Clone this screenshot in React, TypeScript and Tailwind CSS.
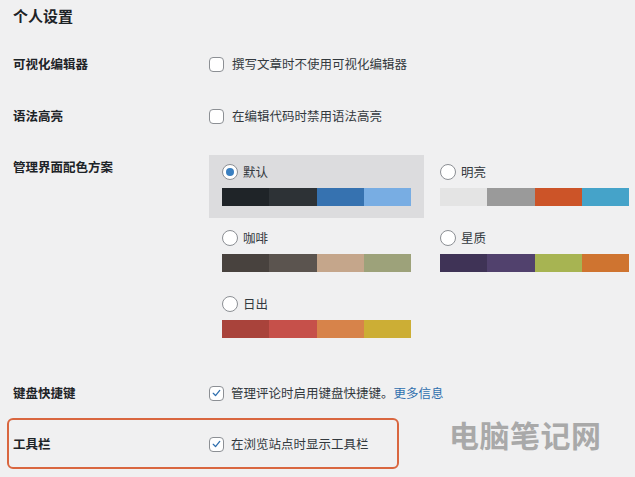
import React from 'react';

type Scheme = { name: string; colors: string[]; selected?: boolean };

const SCHEMES: Scheme[] = [
  { name: '默认', colors: ['#1f2428', '#2d3236', '#3672b0', '#78ade3'], selected: true },
  { name: '明亮', colors: ['#e4e4e4', '#9a9a9a', '#cc5428', '#45a3c9'] },
  { name: '咖啡', colors: ['#48423e', '#5b544f', '#c5a68b', '#9da27a'] },
  { name: '星质', colors: ['#3f3356', '#51416d', '#a7b452', '#cf7430'] },
  { name: '日出', colors: ['#a9433b', '#c6504a', '#d7834a', '#ccae35'] },
];

const Checkbox = ({ checked }: { checked?: boolean }) => (
  <span className="w-[15px] h-[15px] rounded-[4px] border border-[#8c8f94] bg-white flex items-center justify-center shrink-0">
    {checked && (
      <svg viewBox="0 0 20 20" className="w-[14px] h-[14px]">
        <path d="M5 10.5 L8.5 14 L15 6" fill="none" stroke="#2f6fae" strokeWidth="2" strokeLinecap="round" strokeLinejoin="round" />
      </svg>
    )}
  </span>
);

const Radio = ({ checked }: { checked?: boolean }) => (
  <span className="w-[16px] h-[16px] rounded-full border border-[#8c8f94] bg-white flex items-center justify-center shrink-0">
    {checked && <span className="w-[8px] h-[8px] rounded-full bg-[#3a7fc0]" />}
  </span>
);

const Label = ({ children }: { children: React.ReactNode }) => (
  <div className="w-[196px] shrink-0 font-semibold text-[#1d2327]">{children}</div>
);

const App: React.FC = () => {
  return (
    <div
      className="relative w-[635px] h-[477px] overflow-hidden bg-[#f0f0f1] text-[12.5px] leading-[20px] text-[#33393e]"
      style={{ fontFamily: '"Noto Sans CJK SC", "Noto Sans", sans-serif' }}
    >
      <div className="pl-[13px] pt-[6px]">
        {/* Heading */}
        <h2 className="text-[15px] leading-[20px] font-semibold text-[#1d2327]">个人设置</h2>

        {/* Visual editor */}
        <div className="flex items-center mt-[28px]">
          <Label>可视化编辑器</Label>
          <div className="flex items-center gap-[8px]">
            <Checkbox />
            <span>撰写文章时不使用可视化编辑器</span>
          </div>
        </div>

        {/* Syntax highlight */}
        <div className="flex items-center mt-[32px]">
          <Label>语法高亮</Label>
          <div className="flex items-center gap-[8px]">
            <Checkbox />
            <span>在编辑代码时禁用语法高亮</span>
          </div>
        </div>

        {/* Admin color scheme */}
        <div className="flex mt-[29px]">
          <div className="pt-[2px]">
            <Label>管理界面配色方案</Label>
          </div>
          <div className="grid grid-cols-[215px_215px] gap-x-[3px] gap-y-[3px]">
            {SCHEMES.map((s) => (
              <div
                key={s.name}
                className={`h-[63px] pl-[13px] pt-[8px] ${s.selected ? 'bg-[#dcdcde]' : ''}`}
              >
                <div className="flex items-center gap-[5px] h-[18px]">
                  <Radio checked={s.selected} />
                  <span>{s.name}</span>
                </div>
                <div className="flex mt-[7px] w-[189px] h-[18px]">
                  {s.colors.map((c) => (
                    <div key={c} className="flex-1 h-full" style={{ backgroundColor: c }} />
                  ))}
                </div>
              </div>
            ))}
          </div>
        </div>

        {/* Keyboard shortcuts */}
        <div className="flex items-center mt-[33px]">
          <Label>键盘快捷键</Label>
          <div className="flex items-center gap-[7px]">
            <Checkbox checked />
            <span>
              管理评论时启用键盘快捷键。<span className="text-[#2f6fae]">更多信息</span>
            </span>
          </div>
        </div>

        {/* Toolbar */}
        <div className="flex items-center mt-[31px]">
          <Label>工具栏</Label>
          <div className="flex items-center gap-[7px]">
            <Checkbox checked />
            <span>在浏览站点时显示工具栏</span>
          </div>
        </div>
      </div>

      {/* Annotation highlight */}
      <div className="absolute left-[7px] top-[418px] w-[392px] h-[51px] border-2 border-[#d9663f] rounded-[6px] pointer-events-none" />

      {/* Watermark */}
      <div className="absolute left-[449px] top-[416px] text-[30px] leading-[36px] font-bold text-[#a9a9a9] tracking-[0.5px]">
        电脑笔记网
      </div>
    </div>
  );
};

export default App;
